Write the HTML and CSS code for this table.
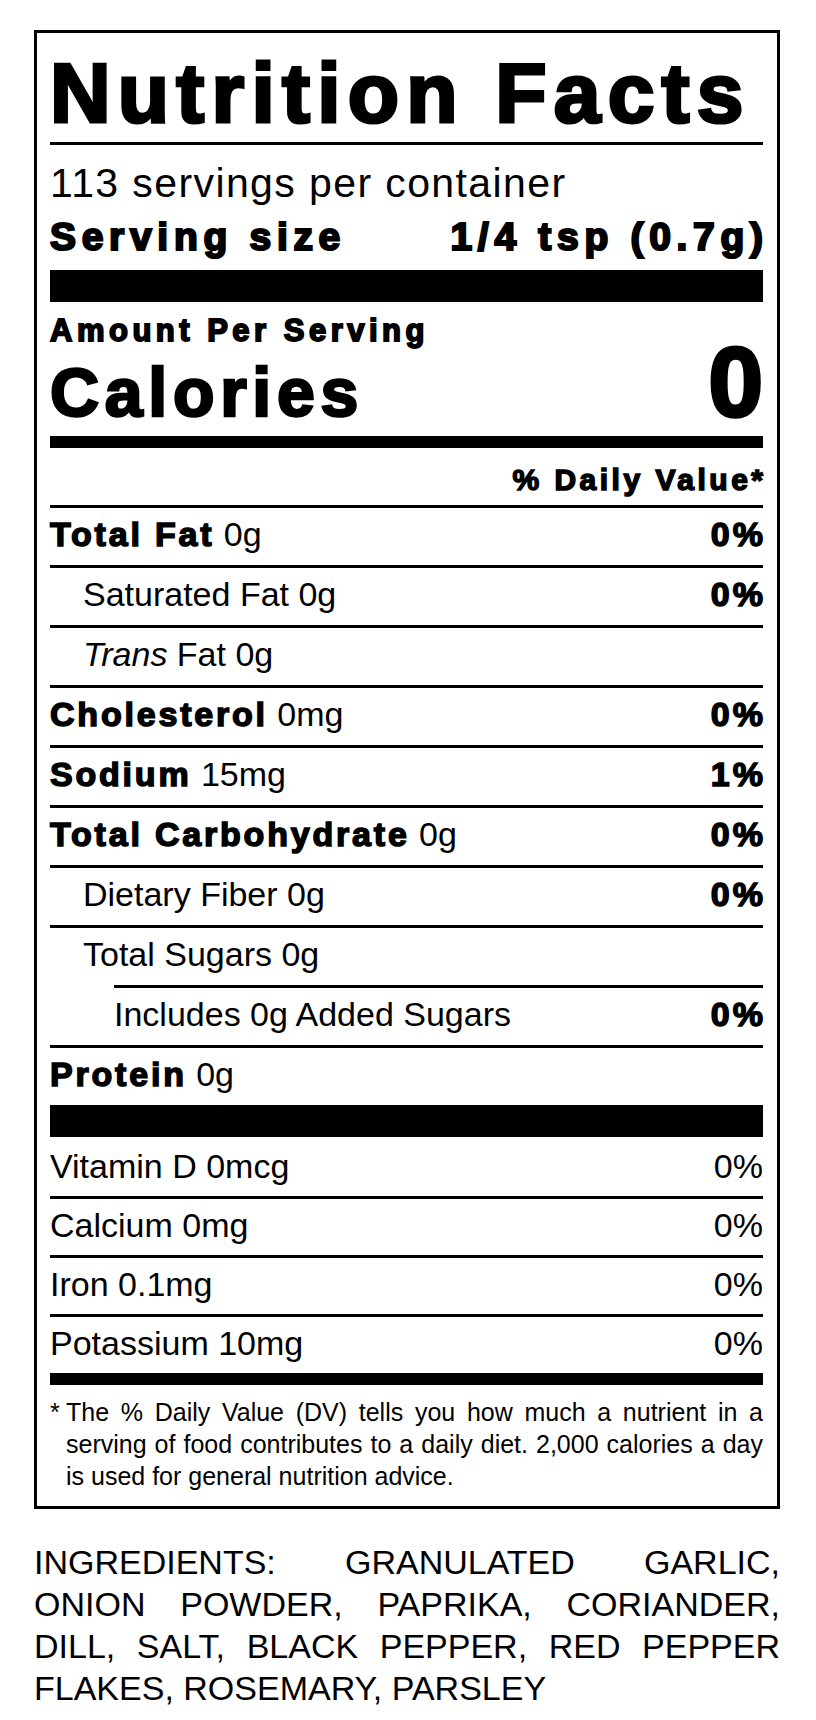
FILE: index.html
```html
<!DOCTYPE html>
<html lang="en">
<head>
<meta charset="utf-8">
<title>Nutrition Facts</title>
<link rel="stylesheet" href="styles.css">
</head>
<body>
<div class="page">
  <section class="label">
    <h1 class="title">Nutrition Facts</h1>
    <div class="rule"></div>
    <p class="servings">113 servings per container</p>
    <div class="serving-size"><span>Serving size</span><span class="ss-value">1/4 tsp (0.7g)</span></div>
    <div class="bar bar-thick"></div>
    <p class="amount">Amount Per Serving</p>
    <div class="calories"><span class="cal-label">Calories</span><span class="cal-value">0</span></div>
    <div class="bar bar-medium"></div>
    <p class="dv-head">% Daily Value*</p>

    <div class="nutrients">
      <div class="row"><span><span class="nut">Total Fat</span> 0g</span><span class="pct">0%</span></div>
      <div class="row sub"><span>Saturated Fat 0g</span><span class="pct">0%</span></div>
      <div class="row sub"><span><i>Trans</i> Fat 0g</span></div>
      <div class="row"><span><span class="nut">Cholesterol</span> 0mg</span><span class="pct">0%</span></div>
      <div class="row"><span><span class="nut">Sodium</span> 15mg</span><span class="pct">1%</span></div>
      <div class="row"><span><span class="nut">Total Carbohydrate</span> 0g</span><span class="pct">0%</span></div>
      <div class="row sub"><span>Dietary Fiber 0g</span><span class="pct">0%</span></div>
      <div class="row sub"><span>Total Sugars 0g</span></div>
      <div class="row added"><span>Includes 0g Added Sugars</span><span class="pct">0%</span></div>
      <div class="row"><span><span class="nut">Protein</span> 0g</span></div>
    </div>

    <div class="bar bar-thick2"></div>

    <div class="vitamins">
      <div class="vrow first"><span>Vitamin D 0mcg</span><span>0%</span></div>
      <div class="vrow"><span>Calcium 0mg</span><span>0%</span></div>
      <div class="vrow"><span>Iron 0.1mg</span><span>0%</span></div>
      <div class="vrow"><span>Potassium 10mg</span><span>0%</span></div>
    </div>

    <div class="bar bar-medium"></div>

    <p class="footnote"><span class="ast">*</span>The % Daily Value (DV) tells you how much a nutrient in a serving of food contributes to a daily diet. 2,000 calories a day is used for general nutrition advice.</p>
  </section>

  <p class="ingredients">
    <span class="ing-line">INGREDIENTS: GRANULATED GARLIC,</span>
    <span class="ing-line">ONION POWDER, PAPRIKA, CORIANDER,</span>
    <span class="ing-line">DILL, SALT, BLACK PEPPER, RED PEPPER</span>
    <span class="ing-line last">FLAKES, ROSEMARY, PARSLEY</span>
  </p>
</div>
</body>
</html>
```

FILE: styles.css
```css
* {
  box-sizing: border-box;
  margin: 0;
  padding: 0;
}

body {
  margin: 0;
  background: #fff;
  color: #000;
  font-family: "Liberation Sans", Arial, Helvetica, sans-serif;
}

.page {
  width: 816px;
  padding: 30px 36px 0 34px;
}

.label {
  width: 746px;
  border: 3px solid #000;
  padding: 17px 14px 14px 13px;
}

.title {
  font-size: 84px;
  line-height: 86px;
  font-weight: 700;
  letter-spacing: 7.2px;
  -webkit-text-stroke: 3.2px #000;
  white-space: nowrap;
}

.rule {
  margin-top: 6px;
  height: 3px;
  background: #000;
}

.servings {
  margin-top: 15px;
  font-size: 41px;
  line-height: 46px;
  letter-spacing: 1.4px;
  white-space: nowrap;
}

.serving-size {
  margin-top: 8px;
  display: flex;
  justify-content: space-between;
  font-size: 39px;
  line-height: 46px;
  font-weight: 700;
  letter-spacing: 5.7px;
  -webkit-text-stroke: 2.2px #000;
  white-space: nowrap;
}

.ss-value {
  margin-right: -5.7px;
}

.bar {
  background: #000;
}

.bar-thick {
  margin-top: 10px;
  height: 32px;
}

.bar-thick2 {
  height: 32px;
}

.bar-medium {
  height: 12px;
}

.amount {
  margin-top: 11px;
  font-size: 31px;
  line-height: 36px;
  font-weight: 700;
  letter-spacing: 4.5px;
  -webkit-text-stroke: 1.8px #000;
  white-space: nowrap;
}

.calories {
  height: 78px;
  display: flex;
  justify-content: space-between;
  align-items: baseline;
  font-weight: 700;
  margin-bottom: 9px;
}

.cal-label {
  font-size: 68px;
  line-height: 68px;
  letter-spacing: 5.7px;
  -webkit-text-stroke: 2.6px #000;
}

.cal-value {
  font-size: 98px;
  line-height: 66px;
  -webkit-text-stroke: 3.6px #000;
}

.dv-head {
  margin-top: 14px;
  margin-right: -3.5px;
  margin-bottom: 7px;
  text-align: right;
  font-size: 30px;
  line-height: 36px;
  font-weight: 700;
  letter-spacing: 3.5px;
  -webkit-text-stroke: 1.5px #000;
}

.row,
.vrow {
  display: flex;
  justify-content: space-between;
  font-size: 34px;
  line-height: 53px;
  border-top: 3px solid #000;
  white-space: nowrap;
}

.row {
  height: 60px;
}

.vrow {
  height: 59px;
}

.vrow.first {
  border-top: 0;
  padding-top: 3px;
}

.row.sub {
  padding-left: 33px;
}

.row.added {
  margin-left: 64px;
}

.nut {
  font-weight: 700;
  letter-spacing: 2.8px;
  -webkit-text-stroke: 1.5px #000;
}

.pct {
  font-weight: 700;
  letter-spacing: 3px;
  margin-right: -3px;
  -webkit-text-stroke: 1.5px #000;
}

.footnote {
  margin-top: 11px;
  padding-left: 16px;
  text-indent: -16px;
  font-size: 25px;
  line-height: 32px;
  text-align: justify;
}

.ast {
  display: inline-block;
  width: 16px;
  text-indent: 0;
}

.ingredients {
  width: 746px;
  margin-top: 32px;
  font-size: 34px;
  line-height: 42px;
}

.ing-line {
  display: block;
  text-align: justify;
  text-align-last: justify;
  white-space: nowrap;
}

.ing-line.last {
  text-align-last: left;
}
```
